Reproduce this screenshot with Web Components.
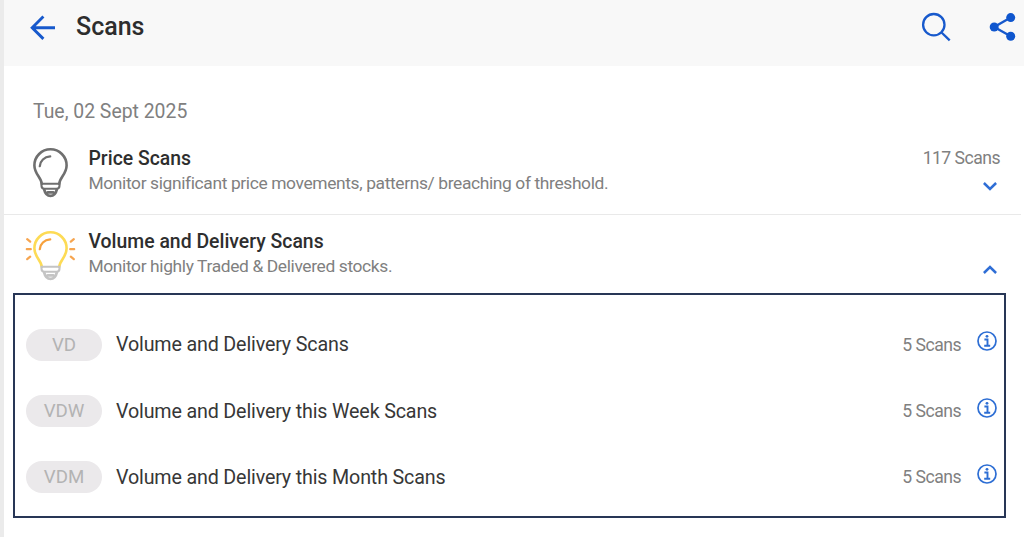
<!DOCTYPE html>
<html lang="en">
<head>
<meta charset="utf-8">
<title>Scans</title>
<style>
body{margin:0;height:537px;overflow:hidden;background:#fff;font-family:Roboto,"Liberation Sans",sans-serif}
</style>
</head>
<body>
<scans-page>
  <scans-header slot="header">Scans</scans-header>
  <scan-group label="Price Scans" desc="Monitor significant price movements, patterns/ breaching of threshold." count="117 Scans"></scan-group>
  <scan-group label="Volume and Delivery Scans" desc="Monitor highly Traded &amp; Delivered stocks." active></scan-group>
  <scan-list slot="list">
    <scan-row code="VD" count="5 Scans">Volume and Delivery Scans</scan-row>
    <scan-row code="VDW" count="5 Scans">Volume and Delivery this Week Scans</scan-row>
    <scan-row code="VDM" count="5 Scans">Volume and Delivery this Month Scans</scan-row>
  </scan-list>
</scans-page>
<script>
class Base extends HTMLElement{
  connectedCallback(){ if(!this.shadowRoot) this.attachShadow({mode:'open'}).innerHTML=this.view(); }
  attr(n){ return (this.getAttribute(n)||'').replace(/&/g,'&amp;'); }
}
const bulb = on => {
  const glass = on ? '#fddb55' : '#6f6f6f', shine = on ? '#f7a13c' : '#6f6f6f', base = on ? '#c4c4c4' : '#6f6f6f';
  return `<svg width="52" height="52" viewBox="0 0 52 52" fill="none" stroke-width="2.6" stroke-linecap="round">
  <path d="M17.8 36.8C17.3 30.5 10.4 26.8 10.4 18.4a16.1 16.1 0 0 1 32.2 0C42.6 26.8 35.7 30.5 35.2 36.8" stroke="${glass}"/>
  <path d="M15.8 19.2c.3-5.3 4.5-9.4 10.4-9.8" stroke="${shine}" stroke-width="2.3"/>
  <path d="M17.5 36.8h18v2q0 3-3 3h-12q-3 0-3-3z" stroke="${base}" stroke-width="2.1"/>
  <path d="M20.2 42.5q1.4 6.3 6.3 6.3t6.3-6.3M23.8 45.3h5.4" stroke="${base}" stroke-width="2.8"/>
  ${on ? `<path d="M3.2 9.2l3 2.5M2.8 19.2h4M3.2 29.2l3-2.5M49.8 9.2l-3 2.5M50.2 19.2h-4M49.8 29.2l-3-2.5" stroke="#f6a550" stroke-width="2.2"/>` : ''}
  </svg>`;
};
customElements.define('scans-page', class extends Base{ view(){ return `
<style>
:host{display:flex;flex-direction:column;box-sizing:border-box;height:537px;border-left:4px solid #ebebeb;background:#fff}
.date{height:66px;box-sizing:border-box;padding:34px 0 0 29px;font-size:19.4px;line-height:24px;color:#808080;white-space:nowrap}
</style>
<slot name="header"></slot><div class="date">Tue, 02 Sept 2025</div><slot></slot><slot name="list"></slot>`; }});
customElements.define('scans-header', class extends Base{ view(){ return `
<style>
:host{display:flex;align-items:flex-start;box-sizing:border-box;height:66px;padding-left:26px;background:#f8f8f8;color:#2d2d2d}
h1{margin:12px auto 0 20px;font-size:25px;line-height:30px;font-weight:500}
svg{display:block;fill:none;stroke:#1759cc}
.back{margin-top:15px}.find{margin:11px 37px 0 0}.share{margin:12px 8px 0 0}
</style>
<svg class="back" width="26" height="26" viewBox="0 0 26 26" stroke-width="2.9"><path d="M25 12.7H2.5M13.4 1.5L2.2 12.7l11.2 11.2"/></svg>
<h1><slot></slot></h1>
<svg class="find" width="30" height="32" viewBox="0 0 30 32" stroke-width="2.3"><circle cx="12.8" cy="13.7" r="10.7"/><path d="M20.5 21.5l8.2 7.8"/></svg>
<svg class="share" width="28" height="30" viewBox="0 0 28 30" stroke-width="2.4"><path d="M22.7 5.5L6.2 15l16.5 9.3"/><g fill="#0f56ce" stroke="none"><circle cx="22.7" cy="5.6" r="4.5"/><circle cx="6.2" cy="15" r="4.5"/><circle cx="22.7" cy="24.2" r="4.5"/></g></svg>`; }});
customElements.define('scan-group', class extends Base{ view(){ const on=this.hasAttribute('active'); return `
<style>
:host{display:flex;box-sizing:border-box;height:83px;margin-right:3px;padding:14px 21px 0 20px;border-bottom:1.5px solid #e9e9e9;white-space:nowrap}
:host([active]){height:78px;border:0}
svg{display:block;flex:none}
.bulb{margin-top:1px}
.text{margin:1px auto 0 12.5px}
h2{margin:0;font-size:19.4px;line-height:24px;font-weight:500;color:#2e2e2e}
p{margin:0;font-size:17.4px;line-height:24px;letter-spacing:-.37px;color:#808080}
.end{width:100px;text-align:right;font-size:17.6px;line-height:24px;letter-spacing:-.52px;color:#808080}
.count{height:24px}
.end svg{margin:12px 3px 0 auto}
</style>
<div class="bulb">${bulb(on)}</div><div class="text"><h2>${this.attr('label')}</h2><p>${this.attr('desc')}</p></div>
<div class="end"><div class="count">${this.attr('count')}</div>
<svg width="14" height="10" viewBox="0 0 14 10" fill="none" stroke="#2f6ed6" stroke-width="2.5"><path d="${on?'M.9 8L7 2l6.1 6':'M.9 1l6.1 6 6.1-6'}"/></svg></div>`; }});
customElements.define('scan-list', class extends Base{ view(){ return `
<style>:host{display:block;box-sizing:border-box;width:993px;height:225px;margin-left:9px;padding-top:16.5px;border:2px solid #283656}</style><slot></slot>`; }});
customElements.define('scan-row', class extends Base{ view(){ return `
<style>
:host{display:flex;align-items:center;height:66.4px;padding:0 7px 0 11px;white-space:nowrap}
.code{width:76px;height:32px;border-radius:16px;background:#ebe9eb;color:#b3b3b3;font-size:18.7px;line-height:32px;text-align:center}
.name{margin:1px auto 0 14px;font-size:19.7px;line-height:24px;letter-spacing:-.16px;color:#373737}
.count{font-size:17.6px;line-height:24px;letter-spacing:-.5px;color:#808080}
svg{margin:0 0 7px 16px}
</style>
<div class="code">${this.attr('code')}</div><div class="name"><slot></slot></div><div class="count">${this.attr('count')}</div>
<svg width="20" height="20" viewBox="0 0 20 20" fill="none" stroke="#2d6ed4" stroke-width="1.7"><circle cx="10" cy="10" r="9"/><path d="M7.4 8.5h3.1v6.2M7.2 14.7h6" stroke-width="1.9"/><circle cx="10" cy="5.3" r="1.4" fill="#2d6ed4" stroke="none"/></svg>`; }});
</script>
</body>
</html>
